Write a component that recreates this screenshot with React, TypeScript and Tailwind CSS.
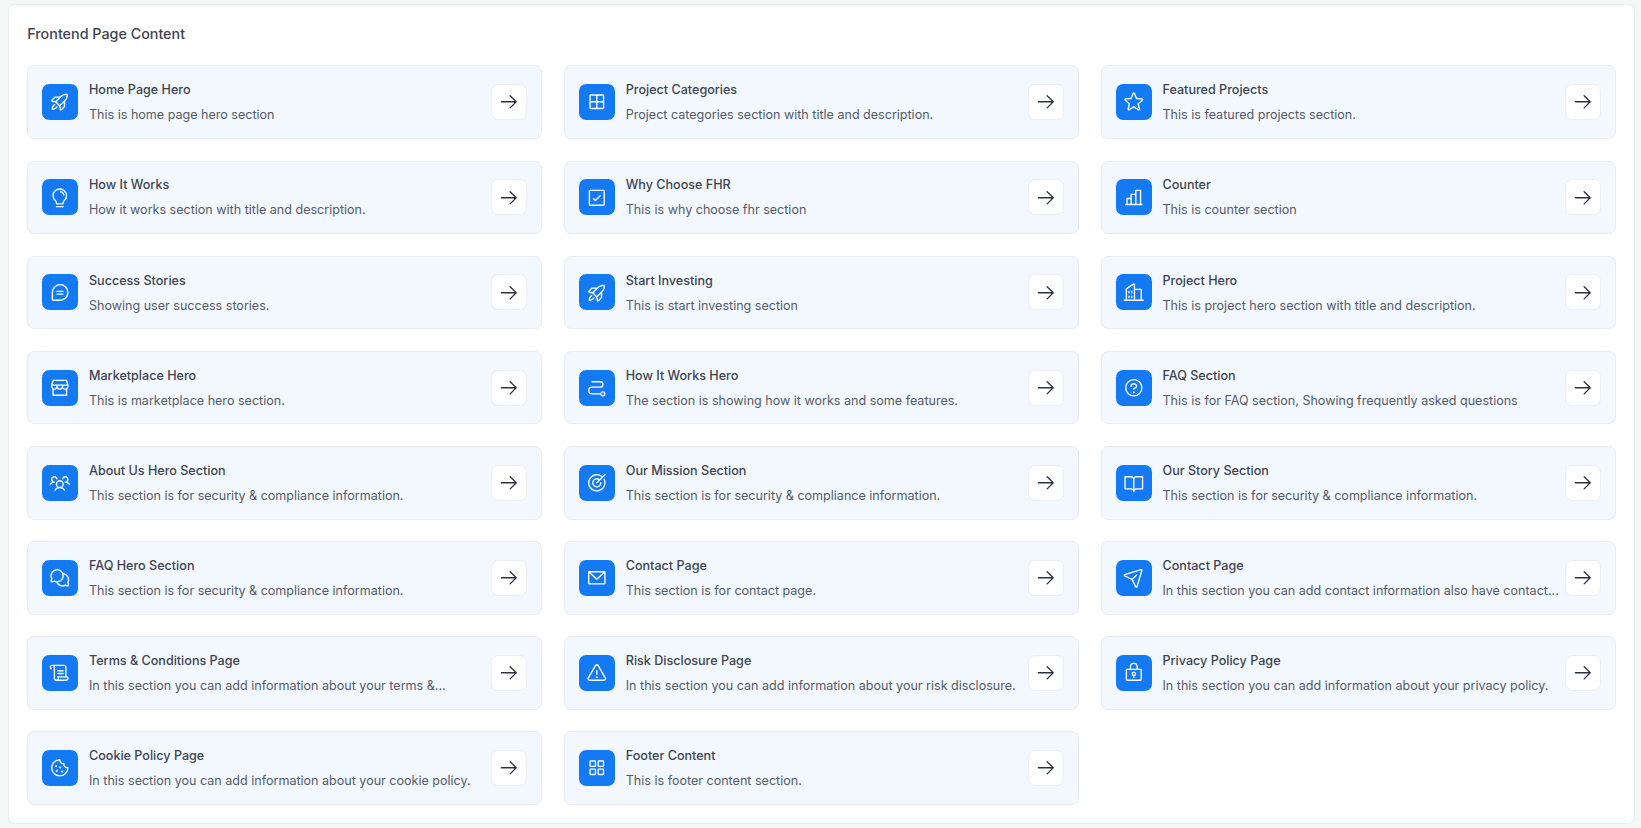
import type { IconType } from "react-icons";
import {
  PiArrowRight,
  PiBookOpen,
  PiBuildings,
  PiChartBar,
  PiChatsCircle,
  PiChatTeardropText,
  PiCheckSquare,
  PiCookie,
  PiEnvelopeSimple,
  PiGridFour,
  PiLightbulb,
  PiLockKey,
  PiPaperPlaneTilt,
  PiPath,
  PiQuestion,
  PiRocketLaunch,
  PiScroll,
  PiSquaresFour,
  PiStar,
  PiStorefront,
  PiTarget,
  PiUsersThree,
  PiWarning,
} from "react-icons/pi";

type Section = { icon: IconType; title: string; text: string };

const compliance = "This section is for security & compliance information.";

const sections: Section[] = [
  { icon: PiRocketLaunch, title: "Home Page Hero", text: "This is home page hero section" },
  { icon: PiGridFour, title: "Project Categories", text: "Project categories section with title and description." },
  { icon: PiStar, title: "Featured Projects", text: "This is featured projects section." },
  { icon: PiLightbulb, title: "How It Works", text: "How it works section with title and description." },
  { icon: PiCheckSquare, title: "Why Choose FHR", text: "This is why choose fhr section" },
  { icon: PiChartBar, title: "Counter", text: "This is counter section" },
  { icon: PiChatTeardropText, title: "Success Stories", text: "Showing user success stories." },
  { icon: PiRocketLaunch, title: "Start Investing", text: "This is start investing section" },
  { icon: PiBuildings, title: "Project Hero", text: "This is project hero section with title and description." },
  { icon: PiStorefront, title: "Marketplace Hero", text: "This is marketplace hero section." },
  { icon: PiPath, title: "How It Works Hero", text: "The section is showing how it works and some features." },
  { icon: PiQuestion, title: "FAQ Section", text: "This is for FAQ section, Showing frequently asked questions" },
  { icon: PiUsersThree, title: "About Us Hero Section", text: compliance },
  { icon: PiTarget, title: "Our Mission Section", text: compliance },
  { icon: PiBookOpen, title: "Our Story Section", text: compliance },
  { icon: PiChatsCircle, title: "FAQ Hero Section", text: compliance },
  { icon: PiEnvelopeSimple, title: "Contact Page", text: "This section is for contact page." },
  { icon: PiPaperPlaneTilt, title: "Contact Page", text: "In this section you can add contact information also have contact..." },
  { icon: PiScroll, title: "Terms & Conditions Page", text: "In this section you can add information about your terms &..." },
  { icon: PiWarning, title: "Risk Disclosure Page", text: "In this section you can add information about your risk disclosure." },
  { icon: PiLockKey, title: "Privacy Policy Page", text: "In this section you can add information about your privacy policy." },
  { icon: PiCookie, title: "Cookie Policy Page", text: "In this section you can add information about your cookie policy." },
  { icon: PiSquaresFour, title: "Footer Content", text: "This is footer content section." },
];

function SectionCard({ icon: Icon, title, text }: Section) {
  return (
    <div className="flex h-[73.6px] items-center justify-between rounded-[7.2px] border border-[#e8ebef] bg-[#f3f8ff] pr-[14.4px] pl-[13.9px]">
      <div className="flex min-w-0 items-center gap-[10.8px]">
        <div className="flex size-9 shrink-0 items-center justify-center rounded-[7.2px] bg-[#147af3] text-white">
          <Icon size={21.6} />
        </div>
        <div className="flex min-w-0 flex-col gap-[5.4px] pt-[0.8px] whitespace-nowrap">
          <h3 className="text-[12.58px] leading-[19.6px] font-medium text-[#3d444f]">{title}</h3>
          <p className="text-[12.56px] leading-[19.6px] text-[#545b67]">{text}</p>
        </div>
      </div>
      <button className="flex size-9 shrink-0 items-center justify-center rounded-[7.2px] border border-[#eceef1] bg-white text-[#2b3340]">
        <PiArrowRight size={21.6} />
      </button>
    </div>
  );
}

export default function App() {
  return (
    <div className="h-[828px] bg-[#f5f7f7] px-[8.3px] pt-[4.4px] font-['Inter',sans-serif]">
      <main className="h-[819.6px] w-[1626.7px] rounded-[7.2px] border border-[#e9eced] bg-white px-[18px] pt-[18px]">
        <h2 className="text-[14.32px] leading-[22px] font-medium text-[#3d444f]">Frontend Page Content</h2>
        <div className="mt-[20px] grid grid-cols-3 gap-x-[21.6px] gap-y-[21.55px]">
          {sections.map((section, i) => (
            <SectionCard key={i} {...section} />
          ))}
        </div>
      </main>
    </div>
  );
}
